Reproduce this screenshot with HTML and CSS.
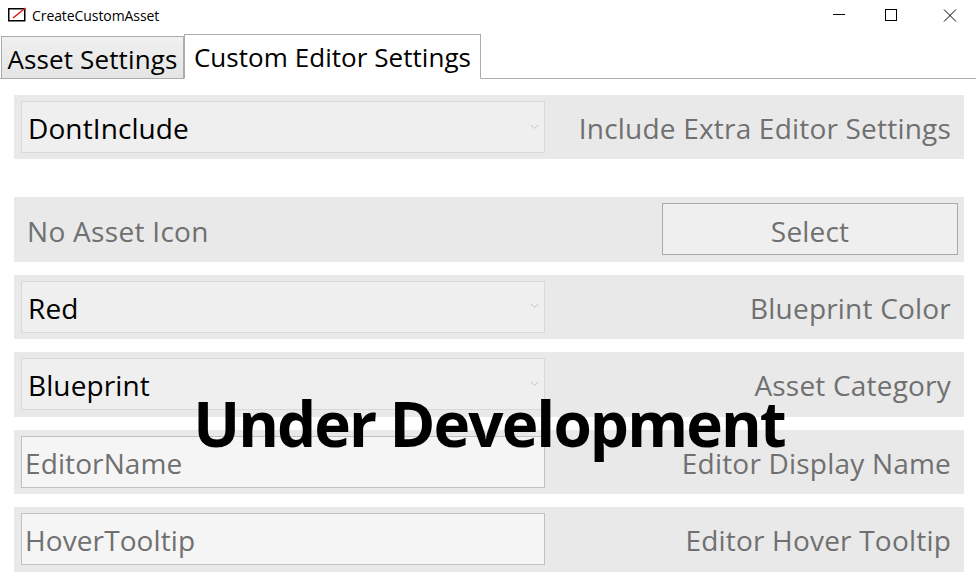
FILE: index.html
```html
<!DOCTYPE html>
<html lang="en">
<head>
<meta charset="utf-8">
<title>CreateCustomAsset</title>
<link rel="stylesheet" href="styles.css">
</head>
<body>
<div class="window">
  <header class="titlebar">
    <svg class="app-icon" width="18" height="15" viewBox="0 0 18 15"><rect x="0.75" y="1.75" width="16" height="12" fill="#fff" stroke="#000" stroke-width="1.5"/><path d="M5 11 L17.5 1" stroke="#d81e1e" stroke-width="1.6" fill="none"/></svg>
    <span class="title">CreateCustomAsset</span>
    <div class="controls">
      <svg class="ctl" width="46" height="30" viewBox="0 0 46 30"><path d="M17 14.5H29" stroke="#000" fill="none"/></svg>
      <svg class="ctl" width="46" height="30" viewBox="0 0 46 30"><rect x="17.5" y="9.5" width="11" height="11" stroke="#000" fill="none"/></svg>
      <svg class="ctl" width="46" height="30" viewBox="0 0 46 30"><path d="M17 9.5L29 21.5M29 9.5L17 21.5" stroke="#000" fill="none"/></svg>
    </div>
  </header>
  <nav class="tabs">
    <div class="tab">Asset Settings</div>
    <div class="tab active">Custom Editor Settings</div>
  </nav>
  <main class="content">
    <section class="row first">
      <div class="field select"><span>DontInclude</span><svg class="chev" width="9" height="6" viewBox="0 0 9 6"><path d="M1 1L4.5 4.5L8 1" stroke="#c4c4c4" fill="none"/></svg></div>
      <label class="label">Include Extra Editor Settings</label>
    </section>
    <section class="row gap-large">
      <span class="noicon">No Asset Icon</span>
      <button class="btn">Select</button>
    </section>
    <section class="row">
      <div class="field select"><span>Red</span><svg class="chev" width="9" height="6" viewBox="0 0 9 6"><path d="M1 1L4.5 4.5L8 1" stroke="#c4c4c4" fill="none"/></svg></div>
      <label class="label">Blueprint Color</label>
    </section>
    <section class="row">
      <div class="field select"><span>Blueprint</span><svg class="chev" width="9" height="6" viewBox="0 0 9 6"><path d="M1 1L4.5 4.5L8 1" stroke="#c4c4c4" fill="none"/></svg></div>
      <label class="label">Asset Category</label>
    </section>
    <section class="row">
      <div class="field input">EditorName</div>
      <label class="label">Editor Display Name</label>
    </section>
    <section class="row">
      <div class="field input">HoverTooltip</div>
      <label class="label">Editor Hover Tooltip</label>
    </section>
  </main>
  <div class="overlay">Under Development</div>
</div>
</body>
</html>
```
FILE: styles.css
```css
html, body { margin: 0; padding: 0; background: #fff; }
body { font-family: "Open Sans", "Noto Sans", sans-serif; overflow: hidden; }
.window { position: relative; width: 976px; height: 579px; overflow: hidden; }
.titlebar { display: flex; align-items: center; height: 30px; padding-left: 8px; }
.app-icon { display: block; margin-right: 6px; margin-top: -1px; }
.title { font-size: 14px; color: #000; letter-spacing: -0.08px; }
.controls { display: flex; margin-left: auto; }
.ctl { display: block; }
.ctl:nth-child(1) { margin-right: 6px; }
.ctl:nth-child(2) { margin-right: 13px; }
.ctl:nth-child(3) { margin-right: 3px; }
.tabs { display: flex; align-items: flex-end; height: 49px; box-sizing: border-box; padding-left: 1px; border-bottom: 1px solid #acacac; }
.tab { box-sizing: border-box; height: 43px; margin-bottom: -1px; border: 1px solid #acacac; background: linear-gradient(#f0f0f0, #e5e5e5); font-size: 26px; line-height: 44px; width: 183px; text-align: center; letter-spacing: 0.12px; color: #000; }
.tab.active { width: 297px; height: 45px; line-height: 45px; background: #fff; border-bottom-color: #fff; letter-spacing: 0.05px; }
.content { padding: 16px 12px 0 14px; }
.row { display: flex; align-items: center; justify-content: space-between; box-sizing: border-box; height: 64.5px; margin-top: 13px; padding: 0 13px 0 7px; background: #e9e9e9; }
.row.first { margin-top: 0; height: 64px; }
.row.gap-large { margin-top: 38px; padding-right: 6px; }
.field { box-sizing: border-box; display: flex; align-items: center; width: 524px; height: 52px; font-size: 28px; letter-spacing: 0.1px; }
.field span, .input { line-height: 40px; }
.select { background: #efefef; border: 1px solid #d9d9d9; padding: 0 6px; color: #000; justify-content: space-between; }
.select span { margin-top: 2px; }
.chev { margin-right: -1px; margin-top: -1px; }
.input { background: #f5f5f5; border: 1px solid #c0c0c0; padding: 2px 2px 0 3px; color: #707070; }
.label { font-size: 28px; color: #707070; letter-spacing: 0.2px; white-space: nowrap; margin-top: 2px; }
.noicon { font-size: 28px; color: #707070; letter-spacing: 0.3px; padding-left: 6px; margin-top: 4px; }
.btn { box-sizing: border-box; width: 296px; height: 52px; padding: 4px 0 0; background: #efefef; border: 1px solid #a9a9a9; font-family: inherit; font-size: 28px; color: #707070; letter-spacing: 0.17px; }
.overlay { position: absolute; left: 0; top: 381px; width: 978px; text-align: center; font-size: 62px; line-height: 84px; font-weight: 700; color: #000; letter-spacing: -1.9px; white-space: nowrap; }
```
